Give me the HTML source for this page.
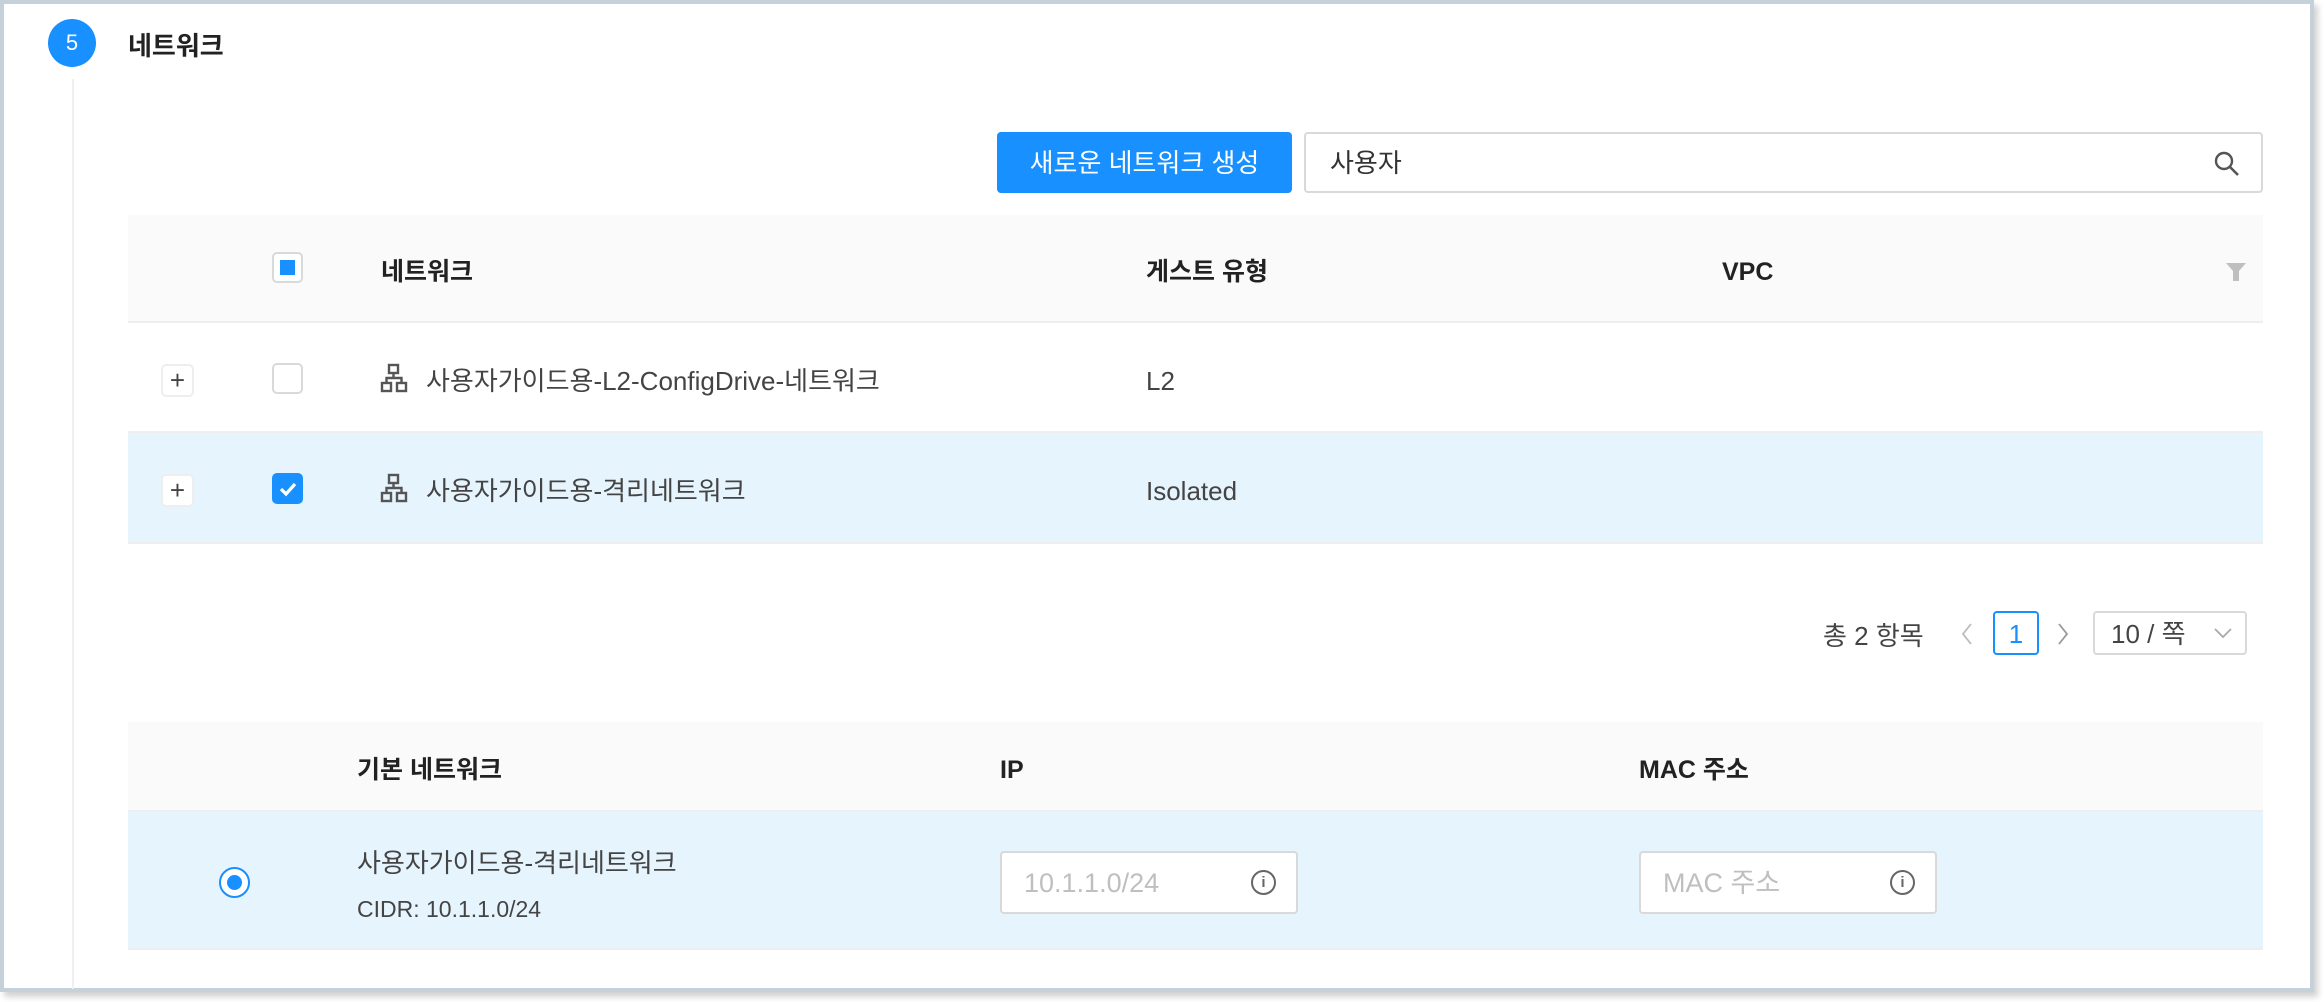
<!DOCTYPE html>
<html><head><meta charset="utf-8"><style>
*{box-sizing:border-box;margin:0;padding:0}
body{width:2324px;height:1002px;background:#fff;position:relative;overflow:hidden;font-family:"Liberation Sans","Noto Sans CJK KR",sans-serif;color:#333}
.frame{position:absolute;left:0;top:0;width:2314px;height:992px;border:4px solid #c4d1d9;background:#fff;box-shadow:4px 5px 6px rgba(0,0,0,.18)}
.a{position:absolute}
.t{position:absolute;height:40px;line-height:40px;white-space:nowrap}
.circle{left:48px;top:19px;width:48px;height:48px;border-radius:50%;background:#1890ff;color:#fff;font-size:22px;text-align:center;line-height:48px}
.vline{left:72px;top:79px;width:2px;height:910px;background:#f0f0f0}
.btn{left:997px;top:132px;width:295px;height:61px;background:#1890ff;border-radius:4px;color:#fff;font-size:26px;text-align:center;line-height:63px}
.search{left:1304px;top:132px;width:959px;height:61px;border:2px solid #d9d9d9;border-radius:4px;font-size:26px;line-height:59px;padding-left:24px;color:#333}
.th{background:#fafafa;border-bottom:2px solid #eee}
.cb{width:31px;height:31px;border:2px solid #d9d9d9;border-radius:5px;background:#fff}
.plus{width:33px;height:33px;border:2px solid #eee;border-radius:5px;background:#fff;font-size:26px;line-height:28px;text-align:center;color:#444}
.txt{font-size:26px;color:#444}
.hb{font-size:25px;font-weight:bold;color:#222}
.inp{height:63px;width:298px;border:2px solid #d9d9d9;border-radius:4px;background:#fff;font-size:27px;color:#bfbfbf;padding-left:22px;line-height:61px}
.info{position:absolute;right:20px;top:17px;width:25px;height:25px;border:2px solid #666;border-radius:50%;font-size:15px;line-height:21px;text-align:center;color:#666;font-weight:bold}
</style></head><body>
<div class="frame"></div>
<div class="a circle">5</div>
<div class="a vline"></div>
<div class="t hb" style="left:128px;top:26px;font-size:26px">네트워크</div>
<div class="a btn">새로운 네트워크 생성</div>
<div class="a search">사용자
<svg style="position:absolute;right:20px;top:16px" width="28" height="28" viewBox="0 0 28 28"><circle cx="11" cy="11" r="8" fill="none" stroke="#555" stroke-width="2.4"/><line x1="17" y1="17" x2="25" y2="25" stroke="#555" stroke-width="2.6"/></svg></div>

<div class="a th" style="left:128px;top:215px;width:2135px;height:108px"></div>
<div class="a cb" style="left:272px;top:252px"><div style="position:absolute;left:6px;top:6px;width:15px;height:15px;background:#1890ff"></div></div>
<div class="t hb" style="left:381px;top:252px">네트워크</div>
<div class="t hb" style="left:1146px;top:252px">게스트 유형</div>
<div class="t hb" style="left:1722px;top:252px">VPC</div>
<svg class="a" style="left:2225px;top:261px" width="22" height="22" viewBox="0 0 22 22"><path d="M1 2h20l-7 8v10h-6V10z" fill="#bfbfbf"/></svg>

<div class="a" style="left:128px;top:323px;width:2135px;height:110px;border-bottom:2px solid #eee"></div>
<div class="a plus" style="left:161px;top:364px">+</div>
<div class="a cb" style="left:272px;top:363px"></div>
<svg class="a" style="left:380px;top:363px" width="28" height="30" viewBox="0 0 28 30"><g fill="none" stroke="#555" stroke-width="2.4"><rect x="9" y="2" width="9" height="8"/><rect x="2" y="20" width="9" height="8"/><rect x="17" y="20" width="9" height="8"/><path d="M13.5 10v5M6.5 20v-5h15v5"/></g></svg>
<div class="t txt" style="left:426px;top:361px">사용자가이드용-L2-ConfigDrive-네트워크</div>
<div class="t txt" style="left:1146px;top:361px">L2</div>

<div class="a" style="left:128px;top:433px;width:2135px;height:111px;background:#e6f4fd;border-bottom:2px solid #eee"></div>
<div class="a plus" style="left:161px;top:474px">+</div>
<div class="a cb" style="left:272px;top:473px;background:#1890ff;border-color:#1890ff"><svg style="position:absolute;left:3px;top:3px" width="22" height="22" viewBox="0 0 22 22"><path d="M4 11l5 5 9-10" fill="none" stroke="#fff" stroke-width="3.2"/></svg></div>
<svg class="a" style="left:380px;top:473px" width="28" height="30" viewBox="0 0 28 30"><g fill="none" stroke="#555" stroke-width="2.4"><rect x="9" y="2" width="9" height="8"/><rect x="2" y="20" width="9" height="8"/><rect x="17" y="20" width="9" height="8"/><path d="M13.5 10v5M6.5 20v-5h15v5"/></g></svg>
<div class="t txt" style="left:426px;top:471px">사용자가이드용-격리네트워크</div>
<div class="t txt" style="left:1146px;top:471px">Isolated</div>

<div class="t txt" style="left:1823px;top:616px">총 2 항목</div>
<svg class="a" style="left:1960px;top:622px" width="14" height="24" viewBox="0 0 14 24"><path d="M11 2L3 12l8 10" fill="none" stroke="#bbb" stroke-width="1.8"/></svg>
<div class="a" style="left:1993px;top:611px;width:46px;height:44px;border:2px solid #1890ff;border-radius:4px;color:#1890ff;font-size:26px;text-align:center;line-height:42px">1</div>
<svg class="a" style="left:2056px;top:622px" width="14" height="24" viewBox="0 0 14 24"><path d="M3 2l8 10-8 10" fill="none" stroke="#999" stroke-width="1.8"/></svg>
<div class="a" style="left:2093px;top:611px;width:154px;height:44px;border:2px solid #d9d9d9;border-radius:4px;font-size:26px;line-height:42px;padding-left:16px;color:#444">10 / 쪽<svg style="position:absolute;right:12px;top:14px" width="20" height="12" viewBox="0 0 20 12"><path d="M2 2l8 8 8-8" fill="none" stroke="#aaa" stroke-width="1.8"/></svg></div>

<div class="a th" style="left:128px;top:722px;width:2135px;height:90px"></div>
<div class="t hb" style="left:357px;top:750px">기본 네트워크</div>
<div class="t hb" style="left:1000px;top:750px">IP</div>
<div class="t hb" style="left:1639px;top:750px">MAC 주소</div>
<div class="a" style="left:128px;top:812px;width:2135px;height:138px;background:#e6f4fd;border-bottom:2px solid #eee"></div>
<div class="a" style="left:219px;top:867px;width:31px;height:31px;border:2px solid #1890ff;border-radius:50%;background:#fff"><div style="position:absolute;left:6px;top:6px;width:15px;height:15px;border-radius:50%;background:#1890ff"></div></div>
<div class="t txt" style="left:357px;top:843px">사용자가이드용-격리네트워크</div>
<div class="t" style="left:357px;top:889px;font-size:23px;color:#444">CIDR: 10.1.1.0/24</div>
<div class="a inp" style="left:1000px;top:851px">10.1.1.0/24<div class="info">i</div></div>
<div class="a inp" style="left:1639px;top:851px">MAC 주소<div class="info">i</div></div>
</body></html>
